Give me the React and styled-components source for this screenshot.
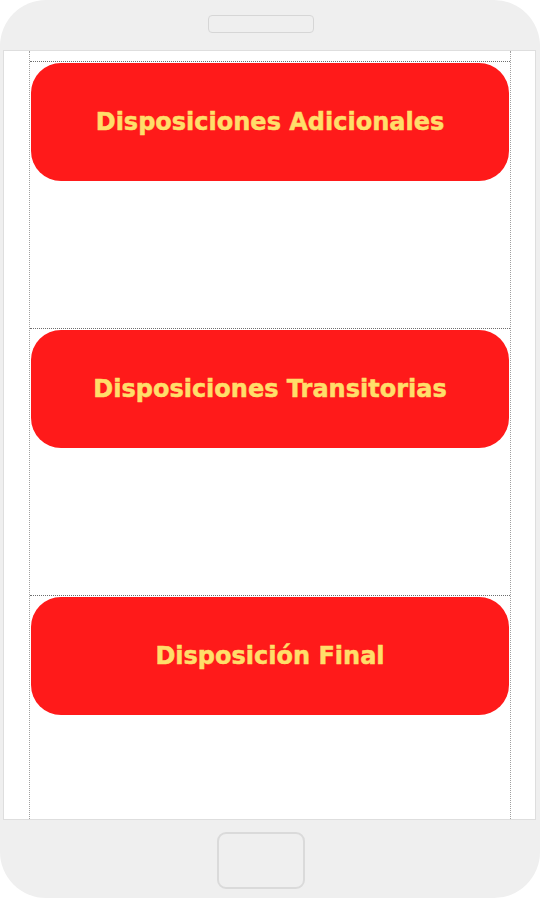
import React from "react";
import styled, { createGlobalStyle } from "styled-components";

const GlobalStyle = createGlobalStyle`
  html, body {
    margin: 0;
    padding: 0;
    background: #ffffff;
  }
  * {
    box-sizing: border-box;
  }
`;

const Phone = styled.div`
  width: 540px;
  height: 898px;
  background-color: #efefef;
  border-radius: 46px;
  padding: 0 4px 0 3px;
  display: flex;
  flex-direction: column;
  overflow: hidden;
`;

const Bezel = styled.div`
  height: ${(p) => p.$height}px;
  flex-shrink: 0;
  display: flex;
  justify-content: center;
  align-items: ${(p) => (p.$top ? "flex-start" : "center")};
  padding-right: 18px;
  padding-top: ${(p) => (p.$top ? "15px" : "0")};
`;

const Speaker = styled.div`
  width: 106px;
  height: 18px;
  border: 1px solid #d6d6d6;
  border-radius: 4px;
`;

const HomeButton = styled.div`
  width: 88px;
  height: 57px;
  border: 2px solid #dadada;
  border-radius: 9px;
  margin-top: 2px;
`;

const Screen = styled.div`
  height: 770px;
  flex-shrink: 0;
  background: #ffffff;
  border: 1px solid #dedede;
  display: flex;
  justify-content: flex-start;
  padding-left: 25px;
  overflow: hidden;
`;

const Content = styled.div`
  width: 482px;
  height: 100%;
  border-left: 1px dotted #a0a0a0;
  border-right: 1px dotted #a0a0a0;
  padding-top: 10px;
  display: flex;
  flex-direction: column;
`;

const Section = styled.div`
  height: 267px;
  flex-shrink: 0;
  border-top: 1px dotted #6e6e6e;
  padding: 1px 1px 0 1px;
`;

const RedButton = styled.button`
  width: 100%;
  height: 118px;
  border: none;
  border-radius: 30px;
  background-color: #ff1a1a;
  color: #ffde6a;
  font-family: "DejaVu Sans", "Liberation Sans", sans-serif;
  font-weight: 700;
  font-size: 24px;
  -webkit-text-stroke: 0.5px #ffde6a;
  display: flex;
  align-items: center;
  justify-content: center;
  cursor: pointer;
`;

const items = [
  "Disposiciones Adicionales",
  "Disposiciones Transitorias",
  "Disposición Final",
];

const App = () => {
  return (
    <>
      <GlobalStyle />
      <Phone>
        <Bezel $height={50} $top>
          <Speaker />
        </Bezel>
        <Screen>
          <Content>
            {items.map((label) => (
              <Section key={label}>
                <RedButton>{label}</RedButton>
              </Section>
            ))}
          </Content>
        </Screen>
        <Bezel $height={78}>
          <HomeButton />
        </Bezel>
      </Phone>
    </>
  );
};

export default App;
